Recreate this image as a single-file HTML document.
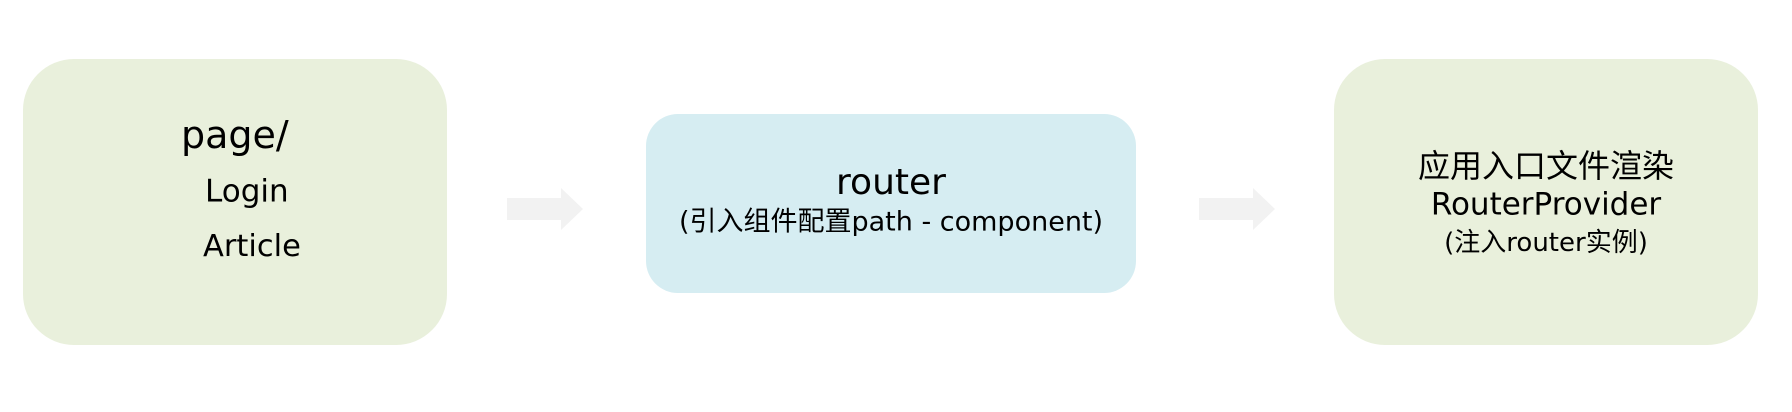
<!DOCTYPE html>
<html><head><meta charset="utf-8"><style>
html,body{margin:0;padding:0;background:#fff;}
body{width:1792px;height:412px;position:relative;overflow:hidden;font-family:"DejaVu Sans","Liberation Sans","Noto Sans CJK SC",sans-serif;color:#000;}
.box{position:absolute;}
.t{position:absolute;white-space:nowrap;line-height:1;}
.c{transform:translate(-50%,-50%);}
.l{transform:translateY(-50%);}
</style></head><body>
<div class="box" style="left:23px;top:59px;width:424px;height:286px;border-radius:51px;background:#e9f0dc"></div>
<div class="box" style="left:646px;top:114px;width:490px;height:179px;border-radius:32px;background:#d6edf2"></div>
<div class="box" style="left:1334px;top:59px;width:424px;height:286px;border-radius:51px;background:#e9f0dc"></div>
<svg style="position:absolute;left:507px;top:188px" width="76" height="42"><polygon points="0,10 54,10 54,0 76,21 54,42 54,32 0,32" fill="#f2f2f2"/></svg>
<svg style="position:absolute;left:1199px;top:188px" width="76" height="42"><polygon points="0,10 54,10 54,0 76,21 54,42 54,32 0,32" fill="#f2f2f2"/></svg>
<div class="t l" style="left:181px;top:135px;font-size:38px">page/</div>
<div class="t l" style="left:205px;top:192px;font-size:31px">Login</div>
<div class="t l" style="left:203px;top:247px;font-size:30.5px">Article</div>
<div class="t c" style="left:891px;top:183px;font-size:36px">router</div>
<div class="t c" style="left:891px;top:222px;font-size:27px">(引入组件配置path - component)</div>
<div class="t c" style="left:1546px;top:166px;font-size:32px">应用入口文件渲染</div>
<div class="t c" style="left:1546px;top:205px;font-size:31px">RouterProvider</div>
<div class="t c" style="left:1546px;top:243px;font-size:26px">(注入router实例)</div>
</body></html>
